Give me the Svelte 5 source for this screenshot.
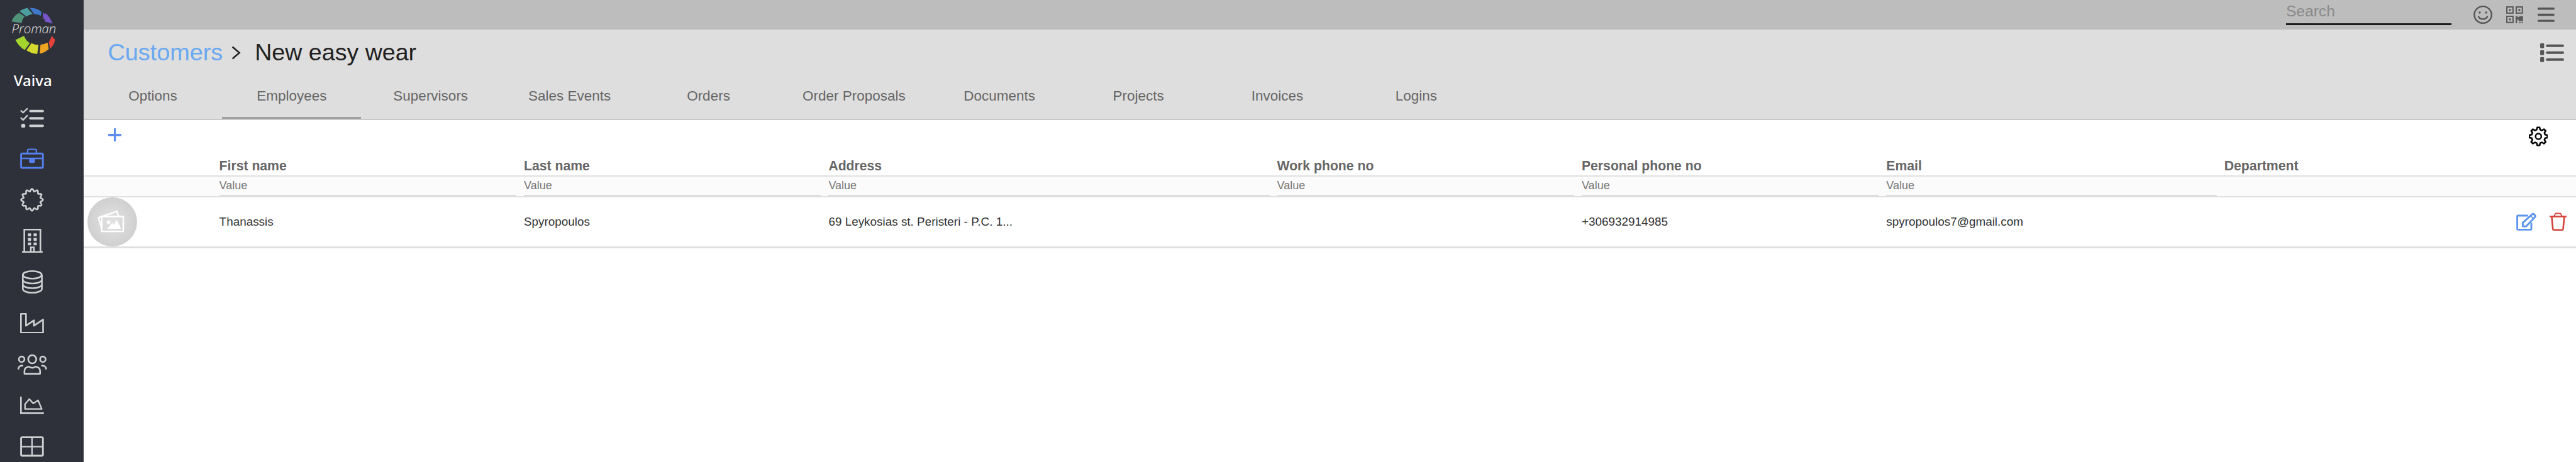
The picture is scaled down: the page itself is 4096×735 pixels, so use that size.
<script>
	const tabs = ['Options', 'Employees', 'Supervisors', 'Sales Events', 'Orders', 'Order Proposals', 'Documents', 'Projects', 'Invoices', 'Logins'];
	const columns = [
		{ label: 'First name', value: 'Thanassis', filter: true },
		{ label: 'Last name', value: 'Spyropoulos', filter: true },
		{ label: 'Address', value: '69 Leykosias st. Peristeri - P.C. 1...', filter: true },
		{ label: 'Work phone no', value: '', filter: true },
		{ label: 'Personal phone no', value: '+306932914985', filter: true },
		{ label: 'Email', value: 'spyropoulos7@gmail.com', filter: true },
		{ label: 'Department', value: '', filter: false }
	];

	function polar(cx, cy, r, deg) {
		const a = (deg * Math.PI) / 180;
		return `${(cx + r * Math.cos(a)).toFixed(1)} ${(cy + r * Math.sin(a)).toFixed(1)}`;
	}

	// wavy ring used for the third nav item
	function wavy(cx, cy, r, depth, n) {
		const pts = [];
		for (let deg = 0; deg < 360; deg += 3) {
			pts.push(polar(cx, cy, r + depth * Math.cos((n * deg * Math.PI) / 180), deg));
		}
		return 'M' + pts.join(' L') + 'Z';
	}

	function gear(cx, cy, outer, inner, n) {
		const step = 360 / n;
		let pts = [];
		for (let i = 0; i < n; i++) {
			const a = i * step - 90;
			pts.push(polar(cx, cy, outer, a - step * 0.17), polar(cx, cy, outer, a + step * 0.17));
			pts.push(polar(cx, cy, inner, a + step * 0.32), polar(cx, cy, inner, a + step * 0.68));
		}
		return 'M' + pts.join(' L') + 'Z';
	}
</script>

<div class="shell">
	<aside class="sidebar">
		<svg class="logo" viewBox="0 0 504 390">
			<path fill="#4f9279" d="M70 130 Q80 95 115 78 L150 100 Q135 112 130 140Z" />
			<path fill="#4c9e9f" d="M117 68 Q140 53 165 48 L197 85 Q175 88 160 100Z" />
			<path fill="#3f78c8" d="M180 47 Q220 47 250 70 L247 95 Q225 86 205 85Z" />
			<path fill="#7555c8" d="M258 75 L270 85 L276 80 Q305 105 318 143 L270 130 L272 118 L262 112Z" />
			<path fill="#e2423a" d="M312 217 L333 240 Q330 270 303 295 L295 255 Q308 238 312 217Z" />
			<path fill="#eea322" d="M245 270 Q270 268 288 258 L295 297 Q270 320 240 325Z" />
			<path fill="#d6d92e" d="M190 262 Q210 272 233 272 L225 328 Q190 325 160 305Z" />
			<path fill="#a4d52c" d="M93 242 L145 217 Q155 245 180 262 L150 303 Q115 285 93 242Z" />
			<text x="70" y="202" class="brand" textLength="270" lengthAdjust="spacingAndGlyphs">Proman</text>
		</svg>
		<div class="user">Vaiva</div>
		<nav>
			<a href="#tasks"><svg viewBox="0 0 146 125" style="width:37.8px;height:32.3px"><g fill="none" stroke="currentColor" stroke-width="9"><path d="M3 18 18 32 46 5M3 62 18 77 46 48" /><path stroke-width="15" stroke-linecap="round" d="M63 22h76M63 67h76M63 113h76" /></g><circle cx="19" cy="113" r="13" fill="currentColor" /></svg></a>
			<a href="#customers" class="active"><svg viewBox="0 0 146 126" style="width:37.8px;height:32.6px"><g fill="none" stroke="currentColor" stroke-width="11"><rect x="6" y="32" width="134" height="88" rx="7" /><path d="M46 32V14a8 8 0 0 1 8-8h38a8 8 0 0 1 8 8v18M6 62h134" stroke-width="9" /></g><rect x="55" y="64" width="36" height="26" rx="7" fill="currentColor" /></svg></a>
			<a href="#groups"><svg viewBox="0 0 146 146" style="width:37.8px;height:37.8px"><path fill="none" stroke="currentColor" stroke-width="10" stroke-linejoin="round" d={wavy(73, 73, 60, 7, 12)} /></svg></a>
			<a href="#companies"><svg viewBox="0 0 127 147" style="width:32.9px;height:38px"><g fill="none" stroke="currentColor" stroke-width="10"><path d="M14 142V5h99v137M0 142h127M54 142v-28h19v28" /></g><g fill="currentColor"><rect x="36" y="28" width="20" height="18" rx="3" /><rect x="71" y="28" width="20" height="18" rx="3" /><rect x="36" y="56" width="20" height="18" rx="3" /><rect x="71" y="56" width="20" height="18" rx="3" /><rect x="36" y="84" width="20" height="18" rx="3" /><rect x="71" y="84" width="20" height="18" rx="3" /></g></svg></a>
			<a href="#data"><svg viewBox="0 0 127 143" style="width:32.9px;height:37px"><g fill="none" stroke="currentColor" stroke-width="10"><ellipse cx="63" cy="28" rx="58" ry="23" /><path d="M5 28v86c0 14 26 24 58 24s59-10 59-24V28M5 57c0 14 26 24 58 24s59-10 59-24M5 86c0 14 26 24 58 24s59-10 59-24" /></g></svg></a>
			<a href="#production"><svg viewBox="0 0 146 126" style="width:37.8px;height:32.6px"><path fill="none" stroke="currentColor" stroke-width="10" stroke-linejoin="round" d="M5 5H36V78L85 45V78L141 40V121H5Z" /></svg></a>
			<a href="#people"><svg viewBox="0 0 180 127" style="width:46.6px;height:32.9px"><g fill="none" stroke="currentColor" stroke-width="10" stroke-linecap="round" stroke-linejoin="round"><circle cx="90" cy="33" r="25" /><circle cx="25" cy="33" r="17" /><circle cx="155" cy="33" r="17" /><path d="M42 122V105C42 88 55 80 70 78 80 88 100 88 110 78 125 80 138 88 138 105V122Z" /><path d="M5 92C5 80 15 72 30 72M175 92C175 80 165 72 150 72" /></g></svg></a>
			<a href="#reports"><svg viewBox="0 0 146 107" style="width:37.8px;height:27.7px"><g fill="none" stroke="currentColor" stroke-width="10"><path d="M5 0V102H146" /><path stroke-width="9" stroke-linejoin="round" d="M30 76V46L56 15 81 42 110 22 133 76Z" /></g></svg></a>
			<a href="#tables"><svg viewBox="0 0 146 126" style="width:37.8px;height:32.6px"><g fill="none" stroke="currentColor" stroke-width="11"><rect x="6" y="6" width="134" height="114" rx="7" /><path stroke-width="9" d="M73 6V120M6 64H140" /></g></svg></a>
		</nav>
	</aside>

	<main class="content">
		<div class="topbar">
			<input class="search" type="text" placeholder="Search" />
			<svg class="i-smile" viewBox="0 0 38 37"><g fill="none" stroke="#555" stroke-width="3"><ellipse cx="19" cy="18.5" rx="17.5" ry="17" /><path stroke-linecap="round" d="M10 22c3 7 15 7 18 0" /></g><circle cx="12.5" cy="14" r="2.2" fill="#555" /><circle cx="25.5" cy="14" r="2.2" fill="#555" /></svg>
			<svg class="i-qr" viewBox="0 0 34 35"><g fill="none" stroke="#5a5a5a" stroke-width="2.6"><rect x="1.3" y="1.3" width="12.4" height="12.4" /><rect x="20.3" y="1.3" width="12.4" height="12.4" /><rect x="1.3" y="20.3" width="12.4" height="12.4" /></g><g fill="#5a5a5a"><rect x="5.5" y="5.5" width="4" height="4" /><rect x="24.5" y="5.5" width="4" height="4" /><rect x="5.5" y="24.5" width="4" height="4" /><path d="M19 20h4v2h3v-2h8v10h-9v-3h-3v8h-3z" /><rect x="26" y="32" width="3" height="3" /><rect x="31" y="32" width="3" height="3" /></g></svg>
			<svg class="i-menu" viewBox="0 0 34 29"><path stroke="#555" stroke-width="4.4" stroke-linecap="round" d="M2 2.2h30M2 14.5h30M2 26.8h30" /></svg>
		</div>

		<header class="head">
			<div class="title">
				<a class="crumb" href="#customers">Customers</a>
				<svg class="chevron" viewBox="0 0 19 28"><path fill="none" stroke="#222" stroke-width="3.2" d="M2 2l14 12L2 26" /></svg>
				<h1>New easy wear</h1>
				<svg class="i-list" viewBox="0 0 48 39"><g fill="#555"><rect x="0" y="1" width="8" height="10" rx="2" /><rect x="0" y="15" width="8" height="10" rx="2" /><rect x="0" y="29" width="8" height="10" rx="2" /><rect x="12" y="3.5" width="36" height="5" rx="2" /><rect x="12" y="17.5" width="36" height="5" rx="2" /><rect x="12" y="31.5" width="36" height="5" rx="2" /></g></svg>
			</div>
			<div class="tabs">
				{#each tabs as tab}
					<button type="button" class:active={tab === 'Employees'}>{tab}</button>
				{/each}
			</div>
		</header>

		<div class="toolbar">
			<svg class="i-plus" viewBox="0 0 27 27"><path stroke="#5b8def" stroke-width="4.4" stroke-linecap="round" d="M13.5 2v23M2 13.5h23" /></svg>
			<svg class="i-gear" viewBox="0 0 40 42"><path fill="none" stroke="#000" stroke-width="3.4" stroke-linejoin="round" d={gear(20, 21, 19, 14.5, 8)} /><circle cx="20" cy="21" r="6" fill="none" stroke="#000" stroke-width="3.2" /></svg>
		</div>

		<div class="grid labels">
			<span></span>
			{#each columns as col}
				<span>{col.label}</span>
			{/each}
		</div>

		<div class="grid filters">
			<span></span>
			{#each columns as col}
				<span class="cell">
					{#if col.filter}
						<input type="text" placeholder="Value" />
					{/if}
				</span>
			{/each}
		</div>

		<div class="grid row">
			<span class="avatar-cell">
				<span class="avatar">
					<svg viewBox="0 0 300 300"><g fill="none" stroke="#fff" stroke-width="9"><rect x="87" y="116" width="130" height="90" /><path d="M88 195 67 123 178 85 190 116" /></g><circle cx="128" cy="150" r="10" fill="#fff" /><path fill="#fff" d="M120 190 150 155 160 166 178 136 204 190Z" /></svg>
				</span>
			</span>
			{#each columns as col}
				<span>{col.value}</span>
			{/each}
			<span class="actions">
				<svg class="i-edit" viewBox="0 0 124 110"><g fill="none" stroke="#5b95ee" stroke-width="11" stroke-linejoin="round"><path d="M72 18H11a5 5 0 0 0-5 5v76a5 5 0 0 0 5 5h76a5 5 0 0 0 5-5V62" /><path d="M40 62 97 10a8 8 0 0 1 11 0l6 6a8 8 0 0 1 0 11L60 84H40Z" /><path d="M88 20l17 17" stroke-width="7" /></g></svg>
				<svg class="i-trash" viewBox="0 0 102 110"><g fill="none" stroke="#d4443a" stroke-width="10" stroke-linejoin="round"><path stroke-linecap="round" d="M4 24h94" /><path d="M28 22l6-14a5 5 0 0 1 4-3h26a5 5 0 0 1 4 3l6 14" stroke-width="7" /><path d="M13 26l7 74a6 6 0 0 0 6 5h50a6 6 0 0 0 6-5l7-74" /></g></svg>
			</span>
		</div>
	</main>
</div>

<style>
	:global(body) {
		margin: 0;
		background: #fff;
	}

	.shell {
		display: flex;
		height: 735px;
		overflow: hidden;
		font-family: 'Liberation Sans', Arial, sans-serif;
	}

	.sidebar {
		flex: 0 0 132.5px;
		background: #2e3139;
		display: flex;
		flex-direction: column;
		overflow: hidden;
	}

	.logo {
		width: 132.5px;
		height: 102.4px;
		flex: none;
	}

	.brand {
		font-family: 'Open Sans', sans-serif;
		font-style: italic;
		font-weight: 300;
		font-size: 75px;
		fill: #e4e4e4;
	}

	.user {
		height: 52px;
		line-height: 52px;
		width: 104.5px;
		text-align: center;
		color: #fff;
		font-family: 'Noto Sans', sans-serif;
		font-size: 24px;
		font-weight: 500;
	}

	nav {
		display: flex;
		flex-direction: column;
	}

	nav a {
		height: 65.4px;
		width: 102.6px;
		display: flex;
		align-items: center;
		justify-content: center;
		color: #cfd0d2;
	}

	nav a.active {
		color: #5480f0;
	}

	.content {
		flex: 1;
		min-width: 0;
		display: flex;
		flex-direction: column;
	}

	.topbar {
		height: 47.3px;
		flex: none;
		background: #bdbdbd;
		display: flex;
		align-items: center;
		justify-content: flex-end;
	}

	.search {
		width: 263px;
		height: 39.5px;
		box-sizing: border-box;
		background: none;
		border: 0;
		border-bottom: 3px solid #1c1c1c;
		padding: 0;
		margin: 0 35px 0 0;
		outline: none;
		align-self: flex-start;
		font: 24.6px 'Liberation Sans', Arial, sans-serif;
	}

	.search::placeholder {
		color: #8a8a8a;
		opacity: 1;
	}

	.i-smile {
		width: 30px;
		height: 29px;
		margin-right: 22px;
	}

	.i-qr {
		width: 26.8px;
		height: 27.6px;
		margin-right: 23.6px;
	}

	.i-menu {
		width: 26.8px;
		height: 22.9px;
		margin-right: 33.9px;
	}

	.head {
		flex: none;
		height: 143.4px;
		box-sizing: border-box;
		background: #dedede;
		border-bottom: 2px solid #c8c8c8;
	}

	.title {
		height: 72.5px;
		display: flex;
		align-items: center;
		padding: 0 18.9px 0 39px;
	}

	.crumb {
		color: #6aa8f0;
		font-size: 37.8px;
		text-decoration: none;
	}

	.chevron {
		width: 15px;
		height: 22px;
		margin: 0 22.6px 0 13.4px;
	}

	h1 {
		margin: 0;
		font-size: 37.6px;
		font-weight: 400;
		color: #212121;
	}

	.i-list {
		width: 37.8px;
		height: 30.7px;
		margin-left: auto;
	}

	.tabs {
		display: flex;
		height: 69.3px;
	}

	.tabs button {
		min-width: 220.9px;
		height: 69.3px;
		padding: 0 39px;
		background: none;
		border: 0;
		border-bottom: 3px solid transparent;
		color: #666;
		font: 22.5px 'Liberation Sans', Arial, sans-serif;
	}

	.tabs button.active {
		border-bottom-color: #a0a0a0;
	}

	.toolbar {
		flex: none;
		height: 58.3px;
		display: flex;
		justify-content: space-between;
		align-items: flex-start;
		padding: 0 44.9px 0 39.4px;
	}

	.i-plus {
		width: 21.3px;
		height: 21.3px;
		margin-top: 13.4px;
	}

	.i-gear {
		width: 30.5px;
		height: 32px;
		margin-top: 10px;
	}

	.grid {
		display: grid;
		grid-template-columns: 216.1px 484.4px 484.4px 713.2px 484.4px 484.4px 537.4px minmax(0, 1fr) auto;
		align-items: center;
		flex: none;
	}

	.labels {
		height: 30px;
		color: #666;
		font-size: 21.2px;
		font-weight: 700;
	}

	.filters {
		height: 34.7px;
		box-sizing: border-box;
		background: #fbfbfb;
		border-top: 2px solid #e0e0e0;
		border-bottom: 2px solid #e0e0e0;
		align-items: stretch;
	}

	.cell {
		display: flex;
	}

	.filters input {
		width: calc(100% - 12px);
		box-sizing: border-box;
		height: 100%;
		background: none;
		border: 0;
		border-bottom: 2px solid #dcdcdc;
		padding: 0;
		outline: none;
		font: 18px 'Liberation Sans', Arial, sans-serif;
	}

	.filters input::placeholder {
		color: #777;
		opacity: 1;
	}

	.row {
		height: 81.8px;
		box-sizing: border-box;
		border-bottom: 3px solid #e0e0e0;
		color: #333;
		font-size: 18.9px;
	}

	.avatar-cell {
		padding-left: 6.3px;
		display: flex;
	}

	.avatar {
		width: 78.8px;
		height: 78.8px;
		border-radius: 50%;
		background: radial-gradient(circle, #e2e2e2 0%, #c8c8c8 100%);
		display: flex;
	}

	.avatar svg {
		width: 100%;
		height: 100%;
	}

	.actions {
		display: flex;
		align-items: center;
		justify-content: flex-end;
		gap: 20.5px;
		padding-right: 15px;
	}

	.i-edit {
		width: 32.3px;
		height: 29.2px;
	}

	.i-trash {
		width: 26.8px;
		height: 29.2px;
	}
</style>
